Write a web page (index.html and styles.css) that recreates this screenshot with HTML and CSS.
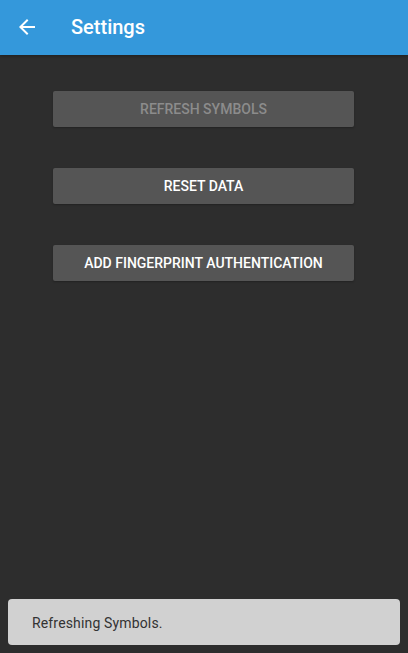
FILE: index.html
```html
<!DOCTYPE html>
<html>
<head>
<meta charset="utf-8">
<link rel="stylesheet" href="styles.css">
</head>
<body>
<div class="app">
  <header class="toolbar">
    <button class="back" aria-label="Back">
      <svg width="24" height="24" viewBox="0 0 24 24"><path d="M20 11H7.83l5.59-5.59L12 4l-8 8 8 8 1.41-1.41L7.83 13H20v-2z" fill="#fff"/></svg>
    </button>
    <h1 class="title">Settings</h1>
  </header>
  <main class="content">
    <button class="btn disabled">Refresh Symbols</button>
    <button class="btn">Reset Data</button>
    <button class="btn">Add Fingerprint Authentication</button>
  </main>
  <div class="snackbar">Refreshing Symbols.</div>
</div>
</body>
</html>
```
FILE: styles.css
```css
html, body {
  margin: 0;
  padding: 0;
  height: 100%;
  background: #2d2d2d;
  font-family: Roboto, "Noto Sans", sans-serif;
}
.app {
  position: relative;
  height: 653px;
  overflow: hidden;
}
.toolbar {
  height: 55px;
  background: #3498db;
  display: flex;
  align-items: center;
  box-shadow: 0 1px 3px rgba(0,0,0,0.3);
}
.back {
  background: none;
  border: 0;
  padding: 0;
  margin-left: 15px;
  width: 24px;
  height: 24px;
  display: flex;
  margin-top: -2px;
}
.title {
  margin: 0 0 0 32px;
  color: #fff;
  font-size: 20px;
  font-weight: 500;
  margin-top: -1px;
}
.content {
  display: flex;
  flex-direction: column;
  align-items: center;
  gap: 41px;
  padding-top: 36px;
  padding-right: 1px;
}
.btn {
  width: 301px;
  height: 36px;
  background: #555555;
  border: 0;
  border-radius: 2px;
  color: #ffffff;
  font-family: Roboto, sans-serif;
  font-size: 14px;
  font-weight: 500;
  text-transform: uppercase;
  box-shadow: 0 1px 2px rgba(0,0,0,0.25);
  padding: 0;
}
.btn.disabled {
  color: #8c8c8c;
}
.snackbar {
  position: absolute;
  left: 8px;
  right: 8px;
  bottom: 8px;
  height: 46px;
  box-sizing: border-box;
  background: #d1d1d1;
  border-radius: 4px;
  color: #333;
  font-size: 14px;
  letter-spacing: 0.15px;
  display: flex;
  align-items: center;
  padding-left: 24px;
  padding-top: 1px;
}
```
